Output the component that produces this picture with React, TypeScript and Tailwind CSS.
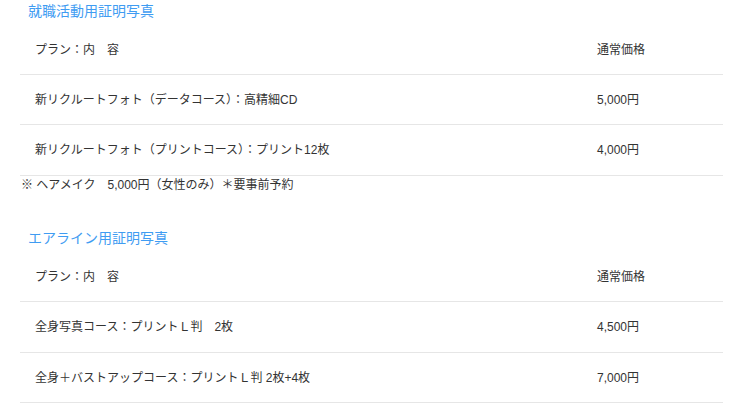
import React from "react";

const font = { fontFamily: '"Liberation Sans", "Noto Sans CJK JP", "Noto Sans", sans-serif' };

type Row = { plan: string; price: string; h: string };

function Section({ title, rows, className = "" }: { title: string; rows: Row[]; className?: string }) {
  return (
    <div className={className}>
      <div className="h-[25px] pl-[8px] text-[14px] leading-[23px] text-[#3f9cf2]">{title}</div>
      <div className="w-[703px]">
        {rows.map((r, i) => (
          <div key={i} className={`flex items-center border-b border-[#e6e6e6] text-[12px] text-[#333333] ${r.h}`}>
            <div className="w-[562px] pl-[15px]">{r.plan}</div>
            <div className="flex-1 pl-[15px]">{r.price}</div>
          </div>
        ))}
      </div>
    </div>
  );
}

export default function App() {
  return (
    <div className="h-[405px] w-[750px] overflow-hidden bg-white pl-[20px]" style={font}>
      <Section
        title="就職活動用証明写真"
        rows={[
          { plan: "プラン：内　容", price: "通常価格", h: "h-[50px]" },
          { plan: "新リクルートフォト（データコース）：高精細CD", price: "5,000円", h: "h-[50px]" },
          { plan: "新リクルートフォト（プリントコース）：プリント12枚", price: "4,000円", h: "h-[51px]" },
        ]}
      />
      <div className="h-[18px] pl-[1px] text-[12px] leading-[18px] text-[#333333]">
        ※ ヘアメイク　5,000円（女性のみ）＊要事前予約
      </div>
      <Section
        className="mt-[33px]"
        title="エアライン用証明写真"
        rows={[
          { plan: "プラン：内　容", price: "通常価格", h: "h-[50px]" },
          { plan: "全身写真コース：プリントＬ判　2枚", price: "4,500円", h: "h-[51px]" },
          { plan: "全身＋バストアップコース：プリントＬ判 2枚+4枚", price: "7,000円", h: "h-[50px]" },
        ]}
      />
    </div>
  );
}
